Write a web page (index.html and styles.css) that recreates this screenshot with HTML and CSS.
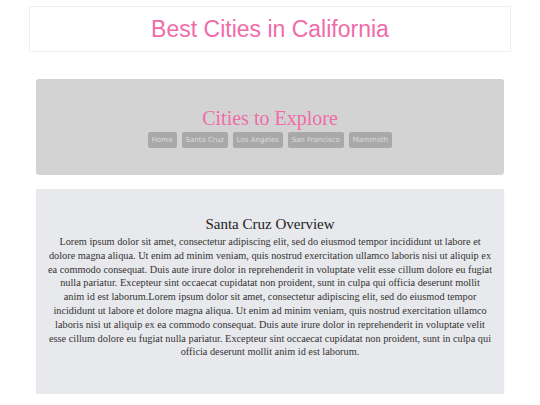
FILE: index.html
```html
<!DOCTYPE html>
<html>
<head>
<meta charset="utf-8">
<title>Best Cities in California</title>
<link rel="stylesheet" href="styles.css">
</head>
<body>
<header class="site-header">
  <h1 class="site-title">Best Cities in California</h1>
</header>
<section class="hero">
  <h2 class="hero-title">Cities to Explore</h2>
  <nav class="nav">
    <a class="nav-btn" href="#">Home</a>
    <a class="nav-btn" href="#">Santa Cruz</a>
    <a class="nav-btn" href="#">Los Angeles</a>
    <a class="nav-btn" href="#">San Francisco</a>
    <a class="nav-btn" href="#">Mammoth</a>
  </nav>
</section>
<section class="overview">
  <h3 class="overview-title">Santa Cruz Overview</h3>
  <p class="overview-text">Lorem ipsum dolor sit amet, consectetur adipiscing elit, sed do eiusmod tempor incididunt ut labore et<br>
dolore magna aliqua. Ut enim ad minim veniam, quis nostrud exercitation ullamco laboris nisi ut aliquip ex<br>
ea commodo consequat. Duis aute irure dolor in reprehenderit in voluptate velit esse cillum dolore eu fugiat<br>
nulla pariatur. Excepteur sint occaecat cupidatat non proident, sunt in culpa qui officia deserunt mollit<br>
anim id est laborum.Lorem ipsum dolor sit amet, consectetur adipiscing elit, sed do eiusmod tempor<br>
incididunt ut labore et dolore magna aliqua. Ut enim ad minim veniam, quis nostrud exercitation ullamco<br>
laboris nisi ut aliquip ex ea commodo consequat. Duis aute irure dolor in reprehenderit in voluptate velit<br>
esse cillum dolore eu fugiat nulla pariatur. Excepteur sint occaecat cupidatat non proident, sunt in culpa qui<br>
officia deserunt mollit anim id est laborum.</p>
</section>
</body>
</html>
```
FILE: styles.css
```css
html, body {
  margin: 0;
  padding: 0;
  background: #ffffff;
}
body {
  padding-top: 6px;
}
.site-header {
  width: 482px;
  height: 46px;
  margin: 0 auto;
  box-sizing: border-box;
  border: 1px solid #f0f0f0;
  display: flex;
  align-items: center;
  justify-content: center;
}
.site-title {
  margin: 0;
  font-family: "Liberation Sans", Arial, sans-serif;
  font-weight: normal;
  font-size: 23px;
  color: #f06ca9;
}
.hero {
  width: 468px;
  height: 96px;
  margin: 27px auto 0;
  background: #d3d3d3;
  border-radius: 3px;
  display: flex;
  flex-direction: column;
  align-items: center;
  justify-content: center;
  box-sizing: border-box;
}
.hero-title {
  margin: 0;
  font-family: "Liberation Serif", "Times New Roman", serif;
  font-weight: normal;
  font-size: 20px;
  line-height: 24px;
  color: #f06ca9;
}
.nav {
  display: flex;
  gap: 5px;
  margin-top: 2px;
}
.nav-btn {
  display: block;
  background: #a9a9a9;
  color: #dcdcdc;
  font-family: "DejaVu Sans", Verdana, sans-serif;
  font-size: 7px;
  line-height: 16px;
  padding: 0 4px;
  border-radius: 2px;
  text-decoration: none;
}
.overview {
  width: 468px;
  height: 205px;
  margin: 14px auto 0;
  background: #e8e9ec;
  box-sizing: border-box;
  padding: 25px 6px 0;
  text-align: center;
  box-shadow: 0 1px 2px rgba(0,0,0,0.04);
}
.overview-title {
  margin: 0 0 1px;
  font-family: "Liberation Serif", "Times New Roman", serif;
  font-weight: normal;
  font-size: 15px;
  line-height: 20px;
  color: #222;
}
.overview-text {
  margin: 0;
  font-family: "Liberation Serif", "Times New Roman", serif;
  font-size: 10.3px;
  line-height: 13.8px;
  color: #333;
}
```
